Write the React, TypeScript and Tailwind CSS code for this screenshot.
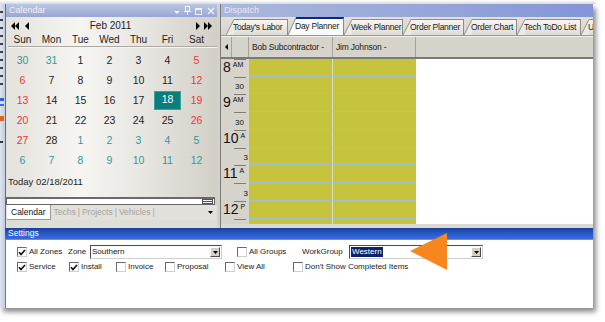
import React from "react";

type Day = { n: number; c: "k" | "r" | "t"; sel?: boolean };

const calRows: Day[][] = [
  [
    { n: 30, c: "t" }, { n: 31, c: "t" }, { n: 1, c: "k" }, { n: 2, c: "k" }, { n: 3, c: "k" }, { n: 4, c: "k" }, { n: 5, c: "r" },
  ],
  [
    { n: 6, c: "r" }, { n: 7, c: "k" }, { n: 8, c: "k" }, { n: 9, c: "k" }, { n: 10, c: "k" }, { n: 11, c: "k" }, { n: 12, c: "r" },
  ],
  [
    { n: 13, c: "r" }, { n: 14, c: "k" }, { n: 15, c: "k" }, { n: 16, c: "k" }, { n: 17, c: "k" }, { n: 18, c: "k", sel: true }, { n: 19, c: "r" },
  ],
  [
    { n: 20, c: "r" }, { n: 21, c: "k" }, { n: 22, c: "k" }, { n: 23, c: "k" }, { n: 24, c: "k" }, { n: 25, c: "k" }, { n: 26, c: "r" },
  ],
  [
    { n: 27, c: "r" }, { n: 28, c: "k" }, { n: 1, c: "t" }, { n: 2, c: "t" }, { n: 3, c: "t" }, { n: 4, c: "t" }, { n: 5, c: "t" },
  ],
  [
    { n: 6, c: "t" }, { n: 7, c: "t" }, { n: 8, c: "t" }, { n: 9, c: "t" }, { n: 10, c: "t" }, { n: 11, c: "t" }, { n: 12, c: "t" },
  ],
];

const colorCls = { k: "text-[#1e1e1e]", r: "text-[#ee3535]", t: "text-[#2f9a98]" };

function Tri({ dir, w = 5, h = 8, color = "#000" }: { dir: "l" | "r" | "d"; w?: number; h?: number; color?: string }) {
  const pts = dir === "l" ? `${w},0 0,${h / 2} ${w},${h}` : dir === "r" ? `0,0 ${w},${h / 2} 0,${h}` : `0,0 ${w},0 ${w / 2},${h}`;
  return (
    <svg width={w} height={h} viewBox={`0 0 ${w} ${h}`} className="block">
      <polygon points={pts} fill={color} />
    </svg>
  );
}

function TitleIcons() {
  return (
    <div className="flex items-center gap-[4px] pr-[2px]">
      <svg width="6" height="8" viewBox="0 0 6 8" className="block">
        <polygon points="0,4 6,4 3,7" fill="#f2f4fb" />
      </svg>
      <svg width="7" height="9" viewBox="0 0 7 9" className="block">
        <rect x="1.5" y="0.5" width="4" height="4.5" fill="none" stroke="#f2f4fb" />
        <line x1="0" y1="5.5" x2="7" y2="5.5" stroke="#f2f4fb" />
        <line x1="3.5" y1="5.5" x2="3.5" y2="9" stroke="#f2f4fb" />
      </svg>
      <svg width="8" height="8" viewBox="0 0 8 8" className="block">
        <rect x="0.5" y="1.5" width="6" height="6" fill="none" stroke="#f2f4fb" />
        <line x1="0.5" y1="2.5" x2="6.5" y2="2.5" stroke="#f2f4fb" />
      </svg>
      <svg width="8" height="8" viewBox="0 0 8 8" className="block">
        <path d="M1 1 L7 7 M7 1 L1 7" stroke="#f2f4fb" strokeWidth="1.4" />
      </svg>
    </div>
  );
}

function Calendar() {
  const heads = ["Sun", "Mon", "Tue", "Wed", "Thu", "Fri", "Sat"];
  return (
    <div className="flex flex-col w-[212px] h-[224px] border-l border-[#6d6d6d] bg-[linear-gradient(to_right,#e4e2dc,#f6f5f2_35%,#e8e6e1_65%,#d2cfc7)] overflow-hidden">
      <div className="h-[13px] shrink-0 flex items-center justify-between pl-[3px] bg-[linear-gradient(to_bottom,#bcc6e4,#98a7d4)]">
        <span className="text-[9px] leading-none text-[#eef1fa]">Calendar</span>
        <TitleIcons />
      </div>
      <div className="h-[17px] shrink-0 flex items-center pl-[5px] pr-[5px]">
        <div className="flex items-center">
          <Tri dir="l" w={4} h={8} />
          <Tri dir="l" w={4} h={8} />
          <div className="w-[6px]" />
          <Tri dir="l" w={4} h={8} />
        </div>
        <div className="flex-1 text-center text-[10px] leading-none text-[#1e1e1e] pr-[4px]">Feb 2011</div>
        <div className="flex items-center">
          <Tri dir="r" w={4} h={8} />
          <div className="w-[4px]" />
          <Tri dir="r" w={4} h={8} />
          <Tri dir="r" w={4} h={8} />
        </div>
      </div>
      <div className="h-[11px] shrink-0 grid grid-cols-[repeat(7,29px)] pl-[2px] items-center">
        {heads.map((h) => (
          <div key={h} className="text-center text-[10px] leading-none text-[#1e1e1e]">{h}</div>
        ))}
      </div>
      <div className="h-[2px] shrink-0 ml-[2px] mt-[1px] bg-[#aeaba5] border-b border-[#f4f4f2]" />
      <div className="h-[2px] shrink-0" />
      <div className="flex flex-col pl-[2px]">
        {calRows.map((r, i) => (
          <div key={i} className="grid grid-cols-[repeat(7,29px)] h-[20px] items-center">
            {r.map((d, j) => (
              <div key={j} className="flex items-center justify-center">
                {d.sel ? (
                  <div className="w-[27px] h-[19px] bg-[#0b7d7b] border border-[#3aa3a0] flex items-center justify-center text-[10.5px] text-white">
                    {d.n}
                  </div>
                ) : (
                  <span className={`text-[10.5px] leading-none ${colorCls[d.c]}`}>{d.n}</span>
                )}
              </div>
            ))}
          </div>
        ))}
      </div>
      <div className="h-[16px] mt-[4px] shrink-0 flex items-center pl-[2px] text-[9.5px] text-[#1e1e1e]">Today 02/18/2011</div>
      <div className="h-[7px] shrink-0" />
      <div className="h-[8px] shrink-0 mr-[2px] border border-[#666] border-t-2 border-t-[#6a6a6a] bg-white flex items-center justify-end pr-[1px]">
        <svg width="11" height="5" viewBox="0 0 11 5" className="block">
          <rect x="0.5" y="0.5" width="10" height="4" fill="#f4f4f4" stroke="#555" />
          <line x1="1" y1="2.5" x2="10" y2="2.5" stroke="#555" />
        </svg>
      </div>
      <div className="h-[15px] shrink-0 flex items-stretch bg-[#e2e0da]">
        <div className="bg-white border-r border-b border-[#9a9890] px-[4px] flex items-center text-[8.5px] text-[#111] ml-[1px]">Calendar</div>
        <div className="flex items-center text-[8.5px] text-[#a6a49e] pl-[3px] gap-[2px]">
          <span>Techs</span><span>|</span><span>Projects</span><span>|</span><span>Vehicles</span><span>|</span>
        </div>
        <div className="flex-1" />
        <div className="flex items-center pr-[4px]">
          <Tri dir="d" w={5} h={3} />
        </div>
      </div>
      <div className="flex-1 bg-[#deddd6]" />
    </div>
  );
}

type TabDef = { label: string; w: string; sel?: boolean };
const tabs: TabDef[] = [
  { label: "Today's Labor", w: "w-[62px]" },
  { label: "Day Planner", w: "w-[56px]", sel: true },
  { label: "Week Planner", w: "w-[59px]" },
  { label: "Order Planner", w: "w-[61px]" },
  { label: "Order Chart", w: "w-[53px]" },
  { label: "Tech ToDo List", w: "w-[64px]" },
  { label: "U", w: "w-[16px]" },
];

function Tab({ t }: { t: TabDef }) {
  return (
    <div className={`relative ${t.w} shrink-0 ${t.sel ? "h-[18px]" : "h-[16px]"} flex items-center overflow-hidden`}>
      <svg className="absolute left-0 top-0 h-full" width="9" height="18" viewBox="0 0 9 18" preserveAspectRatio="none">
        <polygon points="0,18 8,1 9,0 9,18" fill={t.sel ? "#fbfbf9" : "#eceae5"} />
        <line x1="0" y1="18" x2="8" y2="0.5" stroke="#8e8c86" strokeWidth="1" />
      </svg>
      <div
        className={`absolute left-[8px] right-0 top-0 bottom-0 border-r border-[#8e8c86] ${
          t.sel ? "border-t-2 border-t-[#0a2a7a] bg-[#fbfbf9]" : "border-t border-t-[#8e8c86] bg-[linear-gradient(to_bottom,#f6f5f1,#dedcd5)]"
        }`}
      />
      <span className="relative pl-[7px] pt-[1px] text-[8.5px] tracking-[-0.25px] leading-none text-[#1a1a1a] whitespace-nowrap">{t.label}</span>
    </div>
  );
}

type Slot = { h: string; big?: string; suf?: string; small?: string; last?: boolean };
const slots: Slot[] = [
  { h: "h-[18px]", big: "8", suf: "AM" },
  { h: "h-[17px]", small: "30" },
  { h: "h-[18px]", big: "9", suf: "AM" },
  { h: "h-[18px]", small: "30" },
  { h: "h-[18px]", big: "10", suf: "A" },
  { h: "h-[17px]", small: "3" },
  { h: "h-[18px]", big: "11", suf: "A" },
  { h: "h-[18px]", small: "3" },
  { h: "h-[18px]", big: "12", suf: "P" },
  { h: "h-[5px]", small: "", last: true },
];

function Dispatch() {
  return (
    <div className="flex flex-col w-[373px] h-[224px] border-l border-[#7a7a7a] bg-[#d8d5ce] overflow-hidden">
      <div className="h-[13px] shrink-0 flex items-center pl-[3px] bg-[linear-gradient(to_right,#abb7dc,#95a5d9_60%,#8295d8)]">
        <span className="text-[9px] leading-none text-[#e4e9f8]">Dispatch</span>
      </div>
      <div className="h-[19px] shrink-0 flex items-end pl-[5px] bg-[linear-gradient(to_bottom,#e2e0da,#d6d3cc)] border-b border-[#9a9890]">
        {tabs.map((t) => (
          <Tab key={t.label} t={t} />
        ))}
      </div>
      <div className="h-[23px] shrink-0 flex bg-[#d6d3cb] border-b-2 border-[#7a7a7a] border-t border-t-[#f2f1ed]">
        <div className="w-[11px] shrink-0 border-r border-[#a5a39c] flex items-center justify-center">
          <Tri dir="l" w={3} h={6} />
        </div>
        <div className="w-[17px] shrink-0 border-r border-[#a5a39c]" />
        <div className="w-[84px] shrink-0 border-r border-[#a5a39c] flex items-center pl-[3px] text-[8.5px] tracking-[-0.2px] text-[#1a1a1a] whitespace-nowrap overflow-hidden">
          Bob Subcontractor -
        </div>
        <div className="w-[83px] shrink-0 border-r border-[#a5a39c] flex items-center pl-[3px] text-[8.5px] tracking-[-0.2px] text-[#1a1a1a] whitespace-nowrap">
          Jim Johnson -
        </div>
        <div className="flex-1" />
      </div>
      <div className="h-[165px] shrink-0 flex flex-col">
        {slots.map((s, i) => (
          <div key={i} className={`${s.h} shrink-0 flex`}>
            <div className="w-[28px] shrink-0 bg-[#d6d3cb] flex flex-col overflow-hidden">
              <div className="h-[1px] shrink-0 w-[12px] ml-[13px] bg-[#7e7c78]" />
              {s.big ? (
                <div className="flex items-start pl-[2px] whitespace-nowrap">
                  <span className="text-[14px] leading-[15px] text-[#111]">{s.big}</span>
                  <span className="text-[7px] leading-none text-[#111] ml-[2px] mt-[1px]">{s.suf}</span>
                </div>
              ) : (
                <div className={`flex-1 flex items-center justify-end ${s.small === "30" ? "pr-[5px]" : "pr-[1px]"} pt-[2px]`}>
                  <span className="text-[8px] leading-none text-[#111]">{s.small}</span>
                </div>
              )}
            </div>
            <div className={`w-[84px] shrink-0 bg-[#c6c43c] border-r border-[#d6e0c0] ${s.last ? "" : "border-b border-b-[#a4bfca]"}`} />
            <div className={`w-[83px] shrink-0 bg-[#c6c43c] ${s.last ? "" : "border-b border-b-[#a4bfca]"}`} />
            <div className="flex-1 bg-white" />
          </div>
        ))}
      </div>
      <div className="flex-1 bg-[#dcdad3]" />
    </div>
  );
}

function CB({ checked }: { checked?: boolean }) {
  return (
    <span className="w-[10px] h-[10px] shrink-0 border border-[#6a6a6a] border-r-[#cfcfcf] border-b-[#cfcfcf] bg-white flex items-center justify-center">
      {checked && (
        <svg width="8" height="7" viewBox="0 0 8 7" className="block">
          <path d="M1 3.2 L3 5.5 L7 1" stroke="#111" strokeWidth="1.6" fill="none" />
        </svg>
      )}
    </span>
  );
}

function Select({ w, children }: { w: string; children: React.ReactNode }) {
  return (
    <div className={`${w} h-[14px] shrink-0 border border-[#4a4a4a] border-r-[#d0d0d0] border-b-[#d0d0d0] bg-white flex items-center`}>
      <div className="flex-1 pl-[1px] flex items-center text-[8px] leading-none text-[#111]">{children}</div>
      <span className="w-[10px] h-[10px] mr-[1px] bg-[#d4d0c8] border border-[#fafafa] border-r-[#4a4a4a] border-b-[#4a4a4a] flex items-center justify-center">
        <Tri dir="d" w={5} h={3} />
      </span>
    </div>
  );
}

function Item({ w, checked, label }: { w: string; checked?: boolean; label: string }) {
  return (
    <div className={`${w} shrink-0 flex items-center gap-[2px]`}>
      <CB checked={checked} />
      <span className="text-[8px] leading-none text-[#1a1a1a] whitespace-nowrap">{label}</span>
    </div>
  );
}

function Settings() {
  return (
    <div className="h-[80px] flex flex-col">
      <div className="h-[12px] shrink-0 flex items-center pl-[3px] bg-[linear-gradient(to_bottom,#1a3f9e,#2a5fd2_60%,#3a6ad8)] border-b border-[#6b8de0]">
        <span className="text-[8.5px] leading-none text-white">Settings</span>
      </div>
      <div className="flex-1 bg-white border-l border-[#7a7a7a] pt-[5px] flex flex-col gap-[2px]">
        <div className="h-[14px] flex items-center pl-[11px]">
          <Item w="w-[51px]" checked label="All Zones" />
          <span className="w-[22px] shrink-0 text-[8px] leading-none text-[#1a1a1a]">Zone</span>
          <Select w="w-[132px]">Southern</Select>
          <div className="w-[15px] shrink-0" />
          <Item w="w-[65px]" label="All Groups" />
          <span className="w-[47px] shrink-0 text-[8px] leading-none text-[#1a1a1a]">WorkGroup</span>
          <Select w="w-[134px]">
            <span className="bg-[#0a246a] text-white px-[1px] py-[1px]">Western</span>
          </Select>
        </div>
        <div className="h-[12px] flex items-center pl-[11px]">
          <Item w="w-[52px]" checked label="Service" />
          <Item w="w-[47px]" checked label="Install" />
          <Item w="w-[49px]" label="Invoice" />
          <Item w="w-[60px]" label="Proposal" />
          <Item w="w-[68px]" label="View All" />
          <Item w="w-[140px]" label="Don't Show Completed Items" />
        </div>
      </div>
    </div>
  );
}

function LeftSliver() {
  const marks = [10, 20, 29, 37, 45, 53, 62, 70, 78, 86];
  return (
    <div className="w-[5px] shrink-0 h-full bg-[linear-gradient(to_right,#dfe4ee,#c2cce0)] flex flex-col">
      <div className="h-[4px]" />
      {marks.map((m) => (
        <div key={m} className="h-[8px] flex items-center">
          <div className="w-[3px] h-[2px] bg-[#3a3f4a]" />
        </div>
      ))}
      <div className="h-[10px]" />
      <div className="h-[3px] w-[4px] bg-[#2d62c8]" />
      <div className="h-[3px]" />
      <div className="h-[2px] w-[4px] bg-[#3b6fd0]" />
      <div className="h-[10px]" />
      <div className="h-[5px] w-[4px] bg-[#d9681e]" />
      <div className="h-[20px]" />
      <div className="h-[2px] w-[3px] bg-[#333]" />
    </div>
  );
}

export default function App() {
  return (
    <div className="relative w-[605px] h-[322px] bg-white overflow-hidden font-['Liberation_Sans',Arial,sans-serif]">
      <div className="h-[4px] bg-[linear-gradient(to_bottom,#ffffff,#dcdcdc)] w-[596px]" />
      <div className="flex w-[593px] h-[304px] shadow-[3px_4px_5px_rgba(0,0,0,0.45)] bg-white">
        <LeftSliver />
        <div className="flex flex-col w-[588px]">
          <div className="flex h-[224px]">
            <Calendar />
            <div className="w-[3px] shrink-0 bg-[#d4d1c9]" />
            <Dispatch />
          </div>
          <Settings />
        </div>
      </div>
      <svg className="absolute left-[408px] top-[231px]" width="42" height="42" viewBox="0 0 42 42">
        <polygon points="2,20 39,2 39,39" fill="#f7861f" />
      </svg>
    </div>
  );
}
